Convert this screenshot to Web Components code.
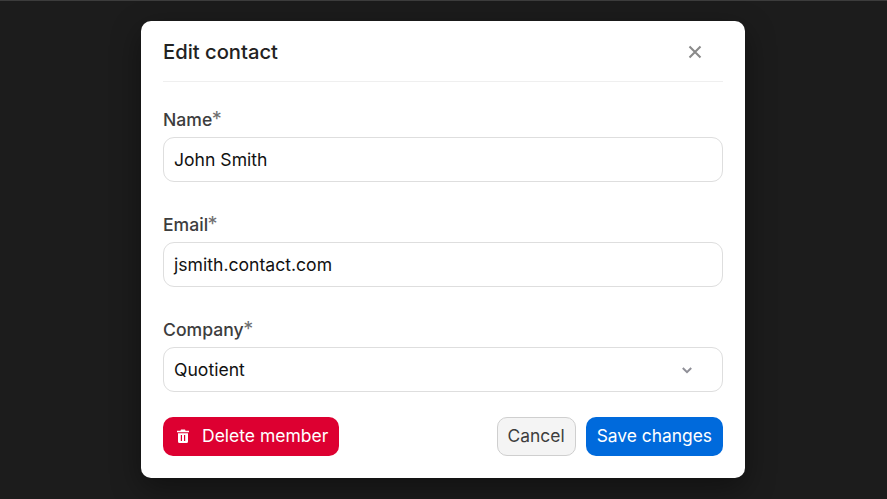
<!DOCTYPE html>
<html>
<head>
<meta charset="utf-8">
<style>
  html, body { margin: 0; height: 100%; }
  body {
    background: #1c1c1c;
    border-top: 1px solid #3c3c3c;
    box-sizing: border-box;
    font-family: Inter, "Liberation Sans", sans-serif;
  }
</style>
</head>
<body>
<edit-dialog heading="Edit contact">
  <form-field label="Name" value="John Smith"></form-field>
  <form-field label="Email" value="jsmith.contact.com"></form-field>
  <form-field label="Company" value="Quotient" select></form-field>
  <action-button slot="footer" kind="danger" icon="trash">Delete member</action-button>
  <action-button slot="footer-end" kind="plain">Cancel</action-button>
  <action-button slot="footer-end" kind="primary">Save changes</action-button>
</edit-dialog>

<script>
class EditDialog extends HTMLElement {
  constructor() {
    super();
    const shadow = this.attachShadow({ mode: 'open' });
    shadow.innerHTML = `
  <style>
    :host {
      display: block;
      width: 604px;
      box-sizing: border-box;
      margin: 20px 0 0 141px;
      padding: 0 22px 22px 22px;
      background: #fff;
      border-radius: 10px;
      box-shadow: 0 10px 30px rgba(0,0,0,.4);
    }
    header {
      display: flex;
      align-items: center;
      justify-content: space-between;
      height: 60px;
      border-bottom: 1px solid #efefef;
    }
    h2 {
      margin: 1px 0 0;
      font-size: 20.200px;
      font-weight: 500;
      color: #222;
    }
    .close {
      display: flex;
      margin: 2px 18.500px 0 0;
    }
    .fields {
      display: flex;
      flex-direction: column;
      gap: 32px;
      margin-top: 27px;
    }
    footer {
      display: flex;
      justify-content: space-between;
      margin-top: 25px;
    }
    .end {
      display: flex;
      gap: 10px;
    }
  </style>
  <header>
    <h2></h2>
    <span class="close">
      <svg width="20" height="20" viewBox="0 0 20 20" fill="none" stroke="#8a8a8a" stroke-width="2.1">
        <path d="M4.500 4.500l11 11M15.500 4.500l-11 11"/>
      </svg>
    </span>
  </header>
  <div class="fields"><slot></slot></div>
  <footer>
    <slot name="footer"></slot>
    <div class="end"><slot name="footer-end"></slot></div>
  </footer>
`;
    shadow.querySelector('h2').textContent = this.getAttribute('heading');
  }
}

class FormField extends HTMLElement {
  constructor() {
    super();
    const shadow = this.attachShadow({ mode: 'open' });
    shadow.innerHTML = `
  <style>
    :host {
      display: block;
    }
    label {
      display: block;
      height: 22px;
      margin-bottom: 6px;
      font-size: 17.600px;
      font-weight: 500;
      line-height: 22px;
      color: #3d3d3d;
    }
    label span {
      color: #6f6f6f;
      font-weight: 400;
      font-size: 20px;
      line-height: 0;
      margin-left: -0.5px;
    }
    .box {
      display: flex;
      align-items: center;
      justify-content: space-between;
      box-sizing: border-box;
      height: 45px;
      padding: 0 28px 0 10px;
      border: 1px solid #dedede;
      border-radius: 11px;
      font-size: 17.600px;
      color: #111;
    }
    svg {
      display: none;
    }
    :host([select]) svg {
      display: block;
    }
  </style>
  <label></label>
  <div class="box">
    <span class="value"></span>
    <svg width="14" height="14" viewBox="0 0 14 14" fill="none" stroke="#8f8f97" stroke-width="2">
      <path d="M2.800 5l4.200 4.200L11.200 5"/>
    </svg>
  </div>
`;
    shadow.querySelector('label').innerHTML = this.getAttribute('label') + '<span>*</span>';
    shadow.querySelector('.value').textContent = this.getAttribute('value');
  }
}

class ActionButton extends HTMLElement {
  constructor() {
    super();
    const shadow = this.attachShadow({ mode: 'open' });
    const icon = this.getAttribute('icon') === 'trash' ? `
    <svg width="16" height="16" viewBox="0 0 16 16" fill="#fff">
      <path fill-rule="evenodd" d="M6 1.500h4l.6 1.200H14v1.600H2V2.700h3.400zM3 5.200h10V13.500a1.500 1.500 0 0 1-1.500 1.500h-7A1.500 1.500 0 0 1 3 13.500zM5.800 7v6h1.200V7zM9 7v6h1.200V7z"/>
    </svg>` : '';
    shadow.innerHTML = `
  <style>
    :host {
      display: inline-flex;
      align-items: center;
      box-sizing: border-box;
      height: 39px;
      padding: 0 11px 2px;
      border-radius: 10px;
      font-size: 17.400px;
      font-weight: 400;
    }
    :host([kind="danger"]) {
      gap: 11px;
      padding: 0 11px 2px 12px;
      background: #dd0031;
      font-size: 17.500px;
      color: #fff;
    }
    :host([kind="primary"]) {
      background: #006adc;
      color: #fff;
    }
    :host([kind="plain"]) {
      padding: 0 10px 2px;
      background: #f4f4f4;
      color: #3d3d3d;
      border: 1px solid #cfcfcf;
    }
  </style>
  ${icon}<slot></slot>
`;
  }
}

customElements.define('edit-dialog', EditDialog);
customElements.define('form-field', FormField);
customElements.define('action-button', ActionButton);
</script>
</body>
</html>
